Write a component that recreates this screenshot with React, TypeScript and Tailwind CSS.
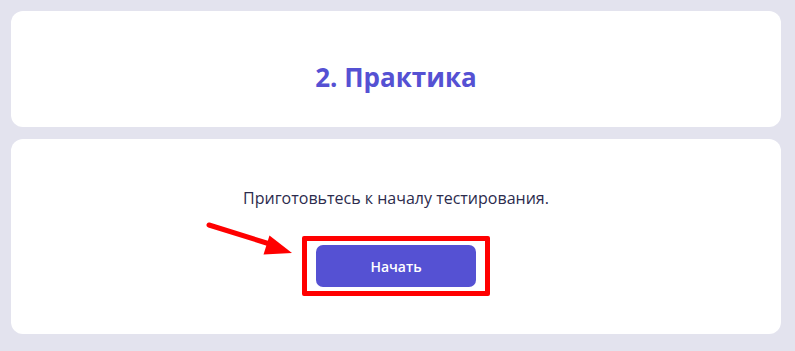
import React from "react";

export default function App() {
  return (
    <div className="min-h-[351px] bg-[#e3e3ee] pl-[11px] pr-[14px] pt-[11px] pb-[17px] flex flex-col gap-[12px] font-['Open_Sans',sans-serif]">
      {/* Title card */}
      <div className="h-[116px] bg-white rounded-[12px] flex justify-center pt-[47px]">
        <h1 className="text-[26px] leading-[38px] font-bold text-[#5551d3]">
          2. Практика
        </h1>
      </div>

      {/* Start card */}
      <div className="relative h-[195px] bg-white rounded-[12px] flex flex-col items-center pt-[47px]">
        <p className="text-[16px] leading-[24px] text-[#2c2b4d]">
          Приготовьтесь к началу тестирования.
        </p>
        <div className="mt-[26px] border-[5px] border-[#ff0000] rounded-[2px] px-[9px] py-[4px]">
          <button className="w-[160px] h-[42px] rounded-[7px] bg-[#5551d3] text-white text-[14px] font-semibold">
            Начать
          </button>
        </div>

        {/* annotation arrow */}
        <svg
          className="absolute left-0 top-0 pointer-events-none"
          width="320"
          height="140"
          viewBox="0 0 320 140"
        >
          <line
            x1="198"
            y1="86"
            x2="262"
            y2="106"
            stroke="#ff0000"
            strokeWidth="5"
            strokeLinecap="round"
          />
          <polygon points="281,114 258.5,96.5 252.5,115.5" fill="#ff0000" />
        </svg>
      </div>
    </div>
  );
}
